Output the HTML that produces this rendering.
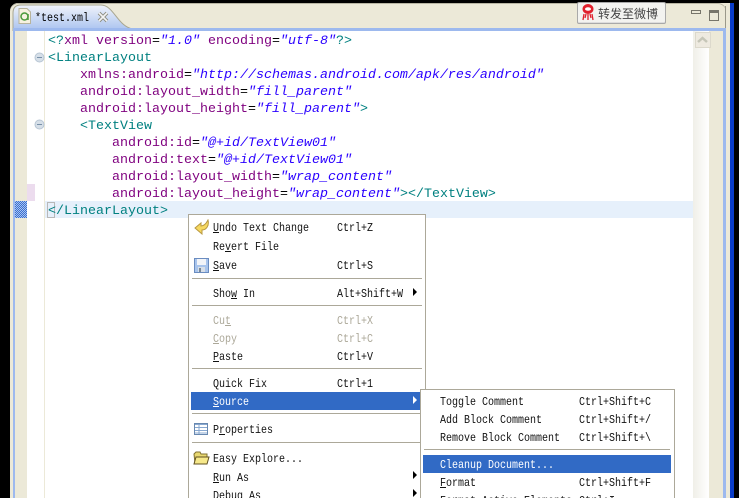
<!DOCTYPE html>
<html><head><meta charset="utf-8">
<style>
html,body{margin:0;padding:0;background:#000;width:739px;height:498px;overflow:hidden}
#r{position:absolute;left:0;top:0;width:739px;height:498px;overflow:hidden;background:#000}
#r div{position:absolute}
#r .code{font:13.33px/17px "Liberation Mono",monospace;white-space:pre;left:48px;height:17px;color:#008080;margin-top:1px}
.e{color:#7f007f}.s{color:#2a00ff;font-style:italic}.k{color:#000}
#r .m{font:12px/14px "Liberation Mono",monospace;white-space:pre;color:#111;transform:scaleX(.8333);transform-origin:0 0;margin-top:1px}
#r .sep{height:1px;background:#aca899}
#r .d{color:#aca899}#r .w{color:#fff}
u{text-underline-offset:1px}
#r .ar{width:0;height:0;border-left:4px solid #000;border-top:4px solid transparent;border-bottom:4px solid transparent}
svg{position:absolute}
</style></head><body><div id="r">
<!-- panel -->
<div style="left:718px;top:3px;width:12px;height:12px;background:#ece9d8"></div>
<div style="left:10px;top:3px;width:716px;height:495px;background:#ece9d8;border-radius:8px 8px 0 0;box-shadow:inset 0 1px #b8b5a3"></div>
<div style="left:725px;top:6px;width:1px;height:492px;background:#9a988a"></div>
<div style="left:726px;top:3px;width:4px;height:495px;background:#ece9d8"></div>
<div style="left:730px;top:3px;width:4px;height:495px;background:#0a3cc8"></div>
<!-- tab -->
<svg style="left:10px;top:3px" width="130" height="29"><defs><linearGradient id="g" x1="0" y1="0" x2="0" y2="1"><stop offset="0" stop-color="#f0f3fa"/><stop offset="1" stop-color="#a5c0ef"/></linearGradient></defs><path d="M3 29V10Q3 2 11 2H91C104 2 108 25 124 26V29Z" fill="url(#g)"/><path d="M3 28V10Q3 2 11 2H91C104 2 108 25 124 26" fill="none" stroke="#a8a690"/></svg>
<!-- editor frame -->
<div style="left:13px;top:28px;width:710px;height:3px;background:#9db9ee"></div>
<div style="left:13px;top:28px;width:2px;height:470px;background:#9db9ee"></div>
<div style="left:723px;top:28px;width:3px;height:470px;background:#9db9ee"></div>
<div style="left:15px;top:31px;width:708px;height:467px;background:#fff"></div>
<div style="left:15px;top:31px;width:12px;height:467px;background:#ece9d8"></div>
<div style="left:44px;top:31px;width:1px;height:467px;background:#ece9d8"></div>
<div style="left:27px;top:184px;width:8px;height:17px;background:#ecdcee"></div>
<div style="left:15px;top:201px;width:12px;height:17px;background:repeating-conic-gradient(#3a6fd0 0 25%,#a9c4f0 0 50%) 0 0/2px 2px"></div>
<div style="left:45px;top:201px;width:648px;height:17px;background:#e6f0fb"></div>
<div style="left:47px;top:202px;width:6px;height:14px;border:1px solid #b8b8b8"></div>
<!-- scrollbar -->
<div style="left:693px;top:31px;width:16px;height:467px;background:linear-gradient(90deg,#f0efe8,#fff)"></div>
<div style="left:709px;top:31px;width:14px;height:467px;background:#ece9d8"></div>
<div style="left:695px;top:32px;width:14px;height:14px;background:#eeeae0;border:1px solid #dcd9cc"></div>
<svg style="left:696px;top:35px" width="14" height="10"><path d="M2 7L6.500 3L11 7" fill="none" stroke="#c6c6b8" stroke-width="2.500"/></svg>
<!-- tab content -->
<svg style="left:18px;top:8px" width="13" height="16"><path d="M1 .5H9L12.500 4V15.500H1Z" fill="#f6f2e0" stroke="#b8b49c"/><circle cx="6.500" cy="8.500" r="3.500" fill="none" stroke="#4c9a3c" stroke-width="1.500"/><path d="M10 6V12" stroke="#4c9a3c" stroke-width="1.500"/></svg>
<div style="left:35px;top:11px;font:12px/14px 'Liberation Mono',monospace;color:#000;white-space:pre;transform:scaleX(.8333);transform-origin:0 0">*test.xml</div>
<svg style="left:97px;top:11px" width="12" height="12"><path d="M2 2L10 10M10 2L2 10" stroke="#8d8d80" stroke-width="3.600"/><path d="M2 2L10 10M10 2L2 10" stroke="#f4f4f4" stroke-width="1.600"/></svg>
<!-- weibo button -->
<div style="left:577px;top:2px;width:87px;height:20px;background:#f3f3f0;border:1px solid #a9a9a9;border-radius:2px;box-shadow:inset 0 -1px #ddd"></div>
<svg style="left:581px;top:3px" width="15" height="18"><ellipse cx="7" cy="6" rx="5.500" ry="5" fill="#e0202c"/><ellipse cx="7" cy="6" rx="3" ry="1.800" fill="#fff"/><path d="M3 11L2 17M7 11V17M11 11L12 17M5 11L4 15M9 11L10 15" stroke="#e0202c" stroke-width="1.300"/></svg>
<div style="left:598px;top:5px;font:12px/17px 'Noto Sans CJK SC','WenQuanYi Zen Hei',sans-serif;color:#444;white-space:pre">转发至微博</div>
<!-- min max -->
<div style="left:691px;top:10px;width:8px;height:2px;border:1px solid #77756a;background:#ece9d8"></div>
<div style="left:709px;top:10px;width:8px;height:7px;border:1px solid #77756a;border-top:3px solid #77756a;background:#ece9d8"></div>
<!-- fold icons -->
<svg style="left:34px;top:52px" width="12" height="80"><circle cx="5.500" cy="5.500" r="4.500" fill="#d6dfe8" stroke="#b8c6d4"/><path d="M3 5.500H8" stroke="#7890a8"/><circle cx="5.500" cy="72.500" r="4.500" fill="#d6dfe8" stroke="#b8c6d4"/><path d="M3 72.500H8" stroke="#7890a8"/></svg>
<!-- code -->
<div class="code" style="top:32px"><span>&lt;?</span><span class="e">xml version</span><span class="k">=</span><span class="s">"1.0"</span> <span class="e">encoding</span><span class="k">=</span><span class="s">"utf-8"</span>?&gt;</div>
<div class="code" style="top:49px">&lt;LinearLayout</div>
<div class="code" style="top:66px">    <span class="e">xmlns:android</span><span class="k">=</span><span class="s">"http://schemas.android.com/apk/res/android"</span></div>
<div class="code" style="top:83px">    <span class="e">android:layout_width</span><span class="k">=</span><span class="s">"fill_parent"</span></div>
<div class="code" style="top:100px">    <span class="e">android:layout_height</span><span class="k">=</span><span class="s">"fill_parent"</span>&gt;</div>
<div class="code" style="top:117px">    &lt;TextView</div>
<div class="code" style="top:134px">        <span class="e">android:id</span><span class="k">=</span><span class="s">"@+id/TextView01"</span></div>
<div class="code" style="top:151px">        <span class="e">android:text</span><span class="k">=</span><span class="s">"@+id/TextView01"</span></div>
<div class="code" style="top:168px">        <span class="e">android:layout_width</span><span class="k">=</span><span class="s">"wrap_content"</span></div>
<div class="code" style="top:185px">        <span class="e">android:layout_height</span><span class="k">=</span><span class="s">"wrap_content"</span>&gt;&lt;/TextView&gt;</div>
<div class="code" style="top:202px">&lt;/LinearLayout&gt;</div>
<!-- main menu -->
<div style="left:188px;top:214px;width:236px;height:290px;background:#fff;border:1px solid #aca899"></div>
<div class="sep" style="left:192px;top:278px;width:230px"></div>
<div class="sep" style="left:192px;top:305px;width:230px"></div>
<div class="sep" style="left:192px;top:368px;width:230px"></div>
<div class="sep" style="left:192px;top:413px;width:230px"></div>
<div class="sep" style="left:192px;top:442px;width:230px"></div>
<div style="left:191px;top:392px;width:229px;height:18px;background:#316ac5"></div>
<div class="m" style="left:213px;top:220px"><u>U</u>ndo Text Change</div><div class="m" style="left:337px;top:220px">Ctrl+Z</div>
<div class="m" style="left:213px;top:239px">Re<u>v</u>ert File</div>
<div class="m" style="left:213px;top:258px"><u>S</u>ave</div><div class="m" style="left:337px;top:258px">Ctrl+S</div>
<div class="m" style="left:213px;top:286px">Sho<u>w</u> In</div><div class="m" style="left:337px;top:286px">Alt+Shift+W</div>
<div class="ar" style="left:413px;top:288px"></div>
<div class="m d" style="left:213px;top:313px">Cu<u>t</u></div><div class="m d" style="left:337px;top:313px">Ctrl+X</div>
<div class="m d" style="left:213px;top:331px"><u>C</u>opy</div><div class="m d" style="left:337px;top:331px">Ctrl+C</div>
<div class="m" style="left:213px;top:349px"><u>P</u>aste</div><div class="m" style="left:337px;top:349px">Ctrl+V</div>
<div class="m" style="left:213px;top:376px">Quick Fix</div><div class="m" style="left:337px;top:376px">Ctrl+1</div>
<div class="m w" style="left:213px;top:394px"><u>S</u>ource</div>
<div class="ar" style="left:413px;top:396px;border-left-color:#fff"></div>
<div class="m" style="left:213px;top:422px">P<u>r</u>operties</div>
<div class="m" style="left:213px;top:451px">Easy Explore...</div>
<div class="m" style="left:213px;top:470px"><u>R</u>un As</div><div class="ar" style="left:413px;top:471px"></div>
<div class="m" style="left:213px;top:488px"><u>D</u>ebug As</div><div class="ar" style="left:413px;top:489px"></div>
<!-- menu icons -->
<svg style="left:194px;top:219px" width="16" height="16"><path d="M1 9L7 4V7C10 7 12 5 14 1C15.500 7 12 11 8 11V15Z" fill="#f6d860" stroke="#b89840"/></svg>
<svg style="left:194px;top:258px" width="15" height="15"><rect x=".5" y=".5" width="14" height="14" fill="#a8c4ec" stroke="#6a8cc0"/><rect x="3" y="1" width="9" height="6" fill="#f2f4f8"/><rect x="4" y="9" width="7" height="5" fill="#d8dfe8"/><rect x="5" y="10" width="2" height="4" fill="#789"/></svg>
<svg style="left:194px;top:423px" width="14" height="12"><rect x=".5" y=".5" width="13" height="11" fill="#fff" stroke="#6888b0"/><path d="M1 1.500H13M1 4.500H13M1 7.500H13M1 10H13" stroke="#88a8d0"/><path d="M5 1V11" stroke="#88a8d0"/></svg>
<svg style="left:193px;top:451px" width="17" height="14"><path d="M1 3L3 1H7L8 3H14V12H2Z" fill="#e8d870" stroke="#807030"/><path d="M3 6H16L14 13H1Z" fill="#f6e88a" stroke="#605020"/></svg>
<!-- submenu -->
<div style="left:420px;top:389px;width:253px;height:115px;background:#fff;border:1px solid #aca899"></div>
<div class="sep" style="left:424px;top:449px;width:246px"></div>
<div style="left:423px;top:455px;width:248px;height:18px;background:#316ac5"></div>
<div class="m" style="left:440px;top:394px">Toggle Comment</div><div class="m" style="left:579px;top:394px">Ctrl+Shift+C</div>
<div class="m" style="left:440px;top:412px">Add Block Comment</div><div class="m" style="left:579px;top:412px">Ctrl+Shift+/</div>
<div class="m" style="left:440px;top:430px">Remove Block Comment</div><div class="m" style="left:579px;top:430px">Ctrl+Shift+\</div>
<div class="m w" style="left:440px;top:457px">Cleanup Document...</div>
<div class="m" style="left:440px;top:475px"><u>F</u>ormat</div><div class="m" style="left:579px;top:475px">Ctrl+Shift+F</div>
<div class="m" style="left:440px;top:493px">Format Active Elements</div><div class="m" style="left:579px;top:493px">Ctrl+I</div>
</div></body></html>
